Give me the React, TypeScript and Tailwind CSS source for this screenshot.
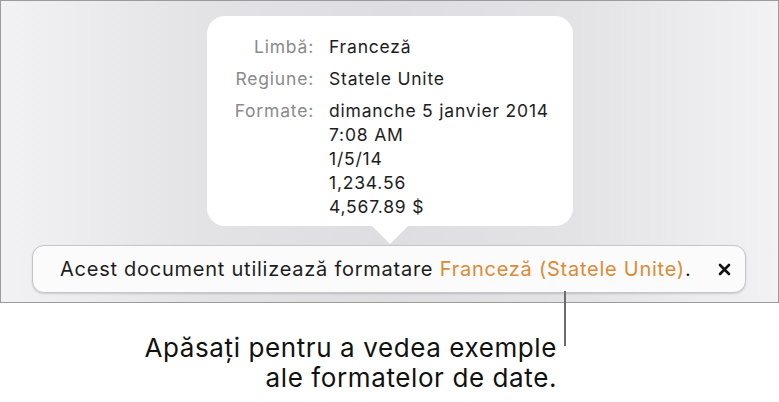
export default function App() {
  const rows: [string, string[]][] = [
    ['Limbă:', ['Franceză']],
    ['Regiune:', ['Statele Unite']],
    ['Formate:', ['dimanche 5 janvier 2014', '7:08 AM', '1/5/14', '1,234.56', '4,567.89 $']],
  ];

  return (
    <div className="w-[779px] h-[402px] bg-white font-['Inter',sans-serif] antialiased">
      <div className="h-[303px] border border-[#9b9b9b] bg-[linear-gradient(90deg,#f2f2f4_0%,#e3e3e6_26%,#dedee2_50%,#e3e3e6_74%,#f2f2f4_100%)] flex flex-col items-center">
        <div className="mt-[15px] ml-[1px] w-[366px] h-[210px] bg-white rounded-[18px] relative pt-[19px] pl-[12px]">
          {rows.map(([label, values], i) => (
            <div key={label} className={`flex gap-[15px] ${i > 0 ? 'mt-[8px]' : ''}`}>
              <div className="w-[95px] text-right text-[17.5px] leading-[24px] tracking-[0.8px] text-[#8a8a8e]">{label}</div>
              <div className="text-[17.5px] leading-[24px] tracking-[0.8px] text-[#1d1d1f]">
                {values.map(v => (
                  <div key={v}>{v}</div>
                ))}
              </div>
            </div>
          ))}
          <div className="absolute left-[164px] -bottom-[18px] w-0 h-0 border-l-[19px] border-r-[19px] border-t-[19px] border-l-transparent border-r-transparent border-t-white" />
        </div>
        <div className="mt-[19px] self-start ml-[31px] w-[714px] h-[48px] rounded-[12px] bg-[#fbfbfb] border border-[#c6c6c8] shadow-[0_1px_2px_rgba(0,0,0,0.15)] flex items-center pl-[27px] pr-[16px] text-[20px] tracking-[0.75px] text-[#1d1d1f]">
          <span>
            Acest document utilizează formatare <span className="text-[#dd8a35]">Franceză (Statele Unite)</span>.
          </span>
          <svg className="ml-auto -mr-[2px]" width="13" height="13" viewBox="0 0 13 13">
            <path d="M2 2 L11 11 M11 2 L2 11" stroke="#111" strokeWidth="2.6" strokeLinecap="round" />
          </svg>
        </div>
      </div>
      <div className="flex justify-end w-[566px] relative">
        <div className="absolute right-0 top-[-12px] w-[2px] h-[55px] bg-[#6b6b6b]" />
        <div className="mr-[9px] mt-[30px] text-right text-[26px] leading-[30px] tracking-[0.6px] text-[#111]">
          <div>Apăsați pentru a vedea exemple</div>
          <div>ale formatelor de date.</div>
        </div>
      </div>
    </div>
  );
}
